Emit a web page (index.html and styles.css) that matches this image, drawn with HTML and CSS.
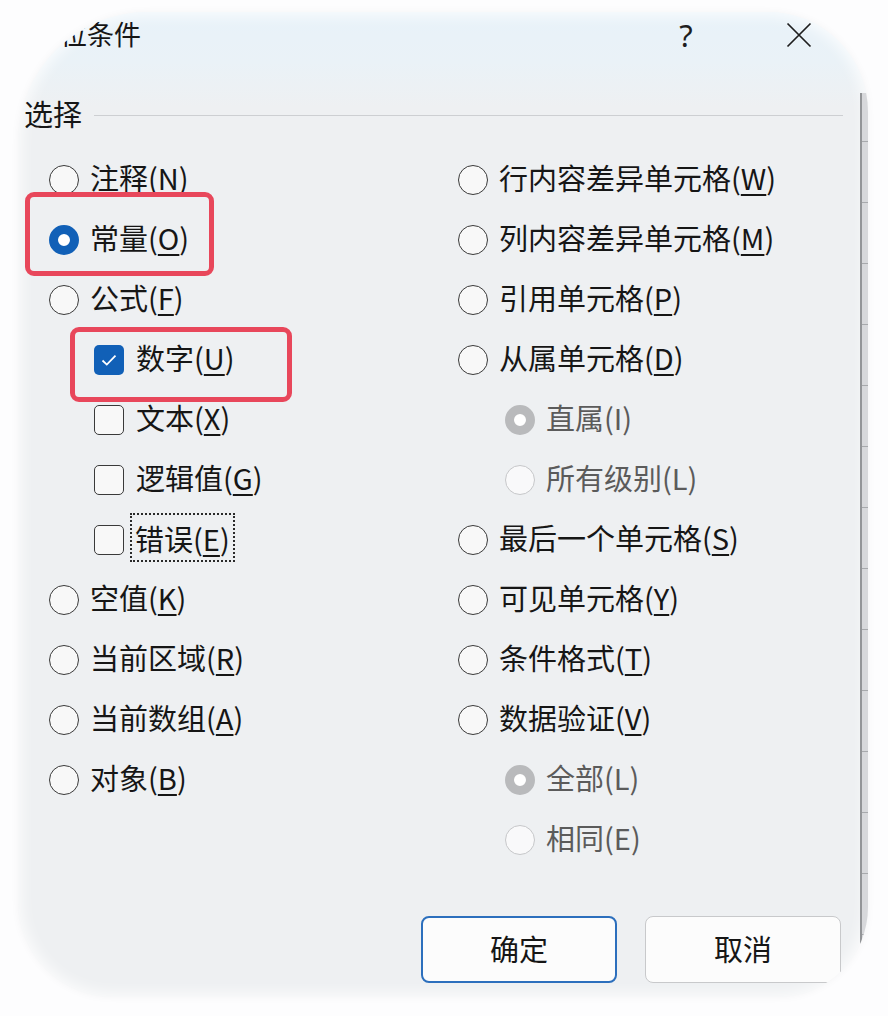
FILE: index.html
```html
<!DOCTYPE html>
<html lang="zh-CN">
<head>
<meta charset="UTF-8" />
<meta name="viewport" content="width=device-width, initial-scale=1" />
<title>定位条件</title>
<link rel="stylesheet" href="styles.css">
</head>
<body>
<div class="dialog">
  <div class="main">
    <div class="titlebar">
      <span class="title">定位条件</span>
      <span class="help">?</span>
      <span class="close">
        <svg width="26" height="26" viewBox="0 0 26 26"><path d="M1.5 1.5 L24.5 24.5 M24.5 1.5 L1.5 24.5" stroke="#1e1e1e" stroke-width="1.7" fill="none"/></svg>
      </span>
    </div>

    <div class="group-head"><span>选择</span><i class="rule"></i></div>

    <div class="options">
      <div class="col">
        <label class="opt"><span class="radio"></span>注释(<u>N</u>)</label>
        <label class="opt mark-a"><span class="radio on"></span>常量(<u>O</u>)</label>
        <label class="opt"><span class="radio"></span>公式(<u>F</u>)</label>
        <label class="opt sub mark-b"><span class="check on"><svg width="30" height="30" viewBox="0 0 30 30"><path d="M8.5 15.5 L12.8 19.6 L21.5 10.6" stroke="#fff" stroke-width="1.8" fill="none"/></svg></span>数字(<u>U</u>)</label>
        <label class="opt sub"><span class="check"></span>文本(<u>X</u>)</label>
        <label class="opt sub"><span class="check"></span>逻辑值(<u>G</u>)</label>
        <label class="opt sub"><span class="check"></span><span class="focus">错误(<u>E</u>)</span></label>
        <label class="opt"><span class="radio"></span>空值(<u>K</u>)</label>
        <label class="opt"><span class="radio"></span>当前区域(<u>R</u>)</label>
        <label class="opt"><span class="radio"></span>当前数组(<u>A</u>)</label>
        <label class="opt"><span class="radio"></span>对象(<u>B</u>)</label>
      </div>
      <div class="col">
        <label class="opt"><span class="radio"></span>行内容差异单元格(<u>W</u>)</label>
        <label class="opt"><span class="radio"></span>列内容差异单元格(<u>M</u>)</label>
        <label class="opt"><span class="radio"></span>引用单元格(<u>P</u>)</label>
        <label class="opt"><span class="radio"></span>从属单元格(<u>D</u>)</label>
        <label class="opt sub2 off"><span class="radio on"></span>直属(I)</label>
        <label class="opt sub2 off"><span class="radio"></span>所有级别(L)</label>
        <label class="opt"><span class="radio"></span>最后一个单元格(<u>S</u>)</label>
        <label class="opt"><span class="radio"></span>可见单元格(<u>Y</u>)</label>
        <label class="opt"><span class="radio"></span>条件格式(<u>T</u>)</label>
        <label class="opt"><span class="radio"></span>数据验证(<u>V</u>)</label>
        <label class="opt sub2 off"><span class="radio on"></span>全部(L)</label>
        <label class="opt sub2 off"><span class="radio"></span>相同(E)</label>
      </div>
    </div>

    <div class="buttons">
      <button type="button" class="btn primary">确定</button>
      <button type="button" class="btn">取消</button>
    </div>
  </div>
  <div class="strip"></div>
</div>
</body>
</html>
```

FILE: styles.css
```css
html, body { margin: 0; background: #fdfdfe; }
body { width: 888px; height: 1016px; overflow: hidden; font-family: "Noto Sans CJK SC", "Noto Sans", sans-serif; color: #161616; }

.dialog {
  display: flex;
  width: 850px; height: 985px;
  margin: 12px 0 0 18px;
  overflow: hidden;
  border-radius: 130px 100px 90px 95px;
  background: linear-gradient(180deg, #e8f2f9 0, #eaf2f7 50px, #eef0f2 95px, #eef0f2 100%);
  box-shadow: inset 0 0 14px 4px rgba(255,255,255,.75), 0 0 8px rgba(0,0,0,.04);
}
.main { flex: 1; }
.strip {
  width: 6px; margin-top: 81px;
  border-left: 2px solid #939598;
  background: repeating-linear-gradient(180deg, #d7d8db 0 60px, #a7a9ac 60px 61px);
  background-position: 0 -12px;
}

.titlebar { display: flex; align-items: center; height: 46px; padding-left: 15px; }
.title { font-size: 27px; line-height: 1; padding-bottom: 4px; }
.help { margin-left: auto; width: 40px; text-align: center; font-family: "Noto Sans", sans-serif; font-size: 31px; line-height: 1; color: #1e1e1e; }
.close { width: 40px; margin: 0 41px 0 73px; display: flex; justify-content: center; }

.group-head { display: flex; align-items: center; height: 28px; margin-top: 43px; padding-left: 6px; font-size: 29px; line-height: 1; }
.group-head span { padding-bottom: 4px; }
.rule { flex: 1; height: 1px; background: #cdcfd2; margin: 0 17px 0 12px; }

.options { display: grid; grid-template-columns: 409px 1fr; margin-top: 21px; padding-left: 31px; }
.col { display: flex; flex-direction: column; }
.opt { position: relative; box-sizing: border-box; display: flex; align-items: center; height: 60px; padding-bottom: 5px; font-size: 29px; line-height: 1; white-space: nowrap; align-self: flex-start; }
.opt u { text-decoration-thickness: 1.6px; text-underline-offset: 4px; }
.opt.sub { margin-left: 45px; }
.opt.sub2 { margin-left: 47px; }
.opt.off { color: #5b5b5b; }

.radio { box-sizing: border-box; width: 30px; height: 30px; margin: 4px 11px 0 0; border-radius: 50%; border: 1.5px solid #3a3a3a; background: #f8f8f8; }
.radio.on { border: 9px solid #1160b7; background: #fff; }
.off .radio { border-color: #c6c7c9; background: #f9f9fa; }
.off .radio.on { border: 9px solid #b9babc; background: #fff; }

.check { box-sizing: border-box; width: 30px; height: 30px; margin: 4px 12px 0 0; border-radius: 5px; border: 1.5px solid #3a3a3a; background: #f8f8f8; }
.check.on { border: none; background: #1160b7; }
.check svg { display: block; }

.focus { outline: 2px dotted #2a2a2a; outline-offset: 0; padding: 9px 3px 7px; margin-left: -4px; }

/* red annotation frames */
.mark-a::after, .mark-b::after {
  content: ""; position: absolute; box-sizing: border-box;
  border: 5px solid #e8475b; border-radius: 9px;
}
.mark-a::after { left: -24px; top: -18px; width: 189px; height: 84px; }
.mark-b::after { left: -24px; top: -3px; width: 222px; height: 75px; }

.buttons { display: flex; justify-content: flex-end; gap: 28px; margin-top: 46px; padding-right: 19px; }
.btn { box-sizing: border-box; width: 196px; height: 67px; padding-bottom: 4px; border: 1px solid #c8c9cb; border-radius: 8px; background: #fcfcfc; font-family: inherit; font-size: 29px; color: #161616; cursor: pointer; }
.btn.primary { border: 2px solid #2c6fbd; }
```
